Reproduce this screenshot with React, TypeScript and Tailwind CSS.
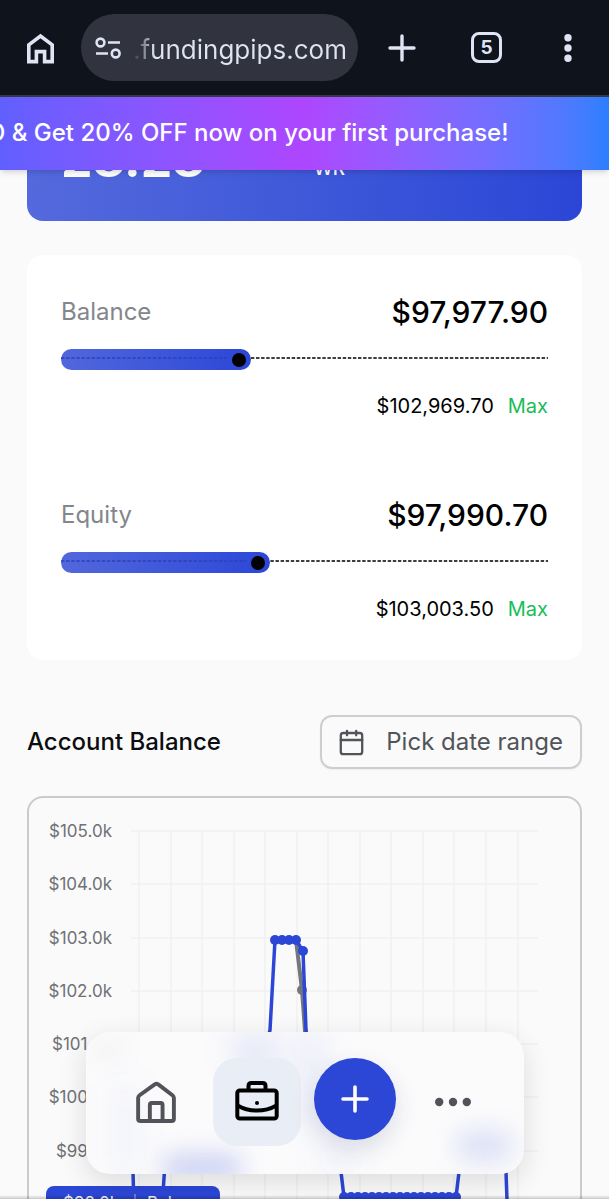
import { useState } from 'react'

const meters = [
  { label: 'Balance', value: '$97,977.90', max: '$102,969.70', fill: 39 },
  { label: 'Equity', value: '$97,990.70', max: '$103,003.50', fill: 43 },
]

const yTicks = [
  { label: '$105.0k', y: 33 },
  { label: '$104.0k', y: 86 },
  { label: '$103.0k', y: 140 },
  { label: '$102.0k', y: 193 },
  { label: '$101.0k', y: 246 },
  { label: '$100.0k', y: 299 },
  { label: '$99.0k', y: 353 },
]

const xLines = [110, 142, 173, 205, 236, 268, 299, 331, 362, 394, 425, 457, 489]

const balanceDots = [
  [246, 142],
  [253, 142],
  [260, 142],
  [267, 142],
  [274, 153],
]

const flatDots = Array.from({ length: 17 }, (_, i) => 315 + i * 7)

function BrowserBar() {
  return (
    <header className="flex h-[97px] shrink-0 items-center border-b-2 border-[#343848] bg-[#0f131c] pr-[36px] pl-[22px] text-[#dfe3f3]">
      <button type="button" aria-label="Home" className="p-1">
        <svg className="block h-[32px] w-[29px]" viewBox="0 0 29 32" fill="none" stroke="currentColor" strokeWidth="3.6">
          <path d="M2.8 29.6V12.8L14.5 4l11.7 8.8v16.8h-7.6V19.6h-8.2v10z" />
        </svg>
      </button>
      <div className="ml-[22px] flex h-[67px] min-w-0 flex-1 items-center rounded-full bg-[#31343e] pr-3 pl-[14px]">
        <button type="button" aria-label="Site settings" className="shrink-0">
          <svg className="block h-[24px] w-[26px]" viewBox="0 0 26 24" fill="none" stroke="currentColor" strokeWidth="2.6">
            <circle cx="5.5" cy="6.5" r="3.9" />
            <circle cx="20.7" cy="17.5" r="3.9" />
            <path d="M13 6.5h12M1 17.5h12" />
          </svg>
        </button>
        <p className="ml-[12px] bg-linear-to-r from-transparent to-[#dfe3f3] to-[22px] bg-clip-text pt-1 text-[26px] whitespace-nowrap text-transparent">
          .fundingpips.com
        </p>
      </div>
      <div className="ml-[30px] flex shrink-0 items-center">
        <button type="button" aria-label="New tab">
          <svg className="block size-[28px]" viewBox="0 0 28 28" stroke="currentColor" strokeWidth="3.4" strokeLinecap="round">
            <path d="M14 2v24M2 14h24" />
          </svg>
        </button>
        <button
          type="button"
          aria-label="Open tabs"
          className="ml-[55px] flex size-[31px] items-center justify-center rounded-lg border-3 border-current text-[19px] leading-none font-bold"
        >
          5
        </button>
        <button type="button" aria-label="Menu" className="ml-[61px]">
          <svg className="block h-[30px] w-[10px]" viewBox="0 0 10 30" fill="currentColor">
            <circle cx="5" cy="4.8" r="3.7" />
            <circle cx="5" cy="15" r="3.7" />
            <circle cx="5" cy="25.2" r="3.7" />
          </svg>
        </button>
      </div>
    </header>
  )
}

function Meter({ label, value, max, fill }: (typeof meters)[number]) {
  return (
    <div>
      <div className="flex items-center justify-between">
        <span className="text-[24px] text-[#83868b]">{label}</span>
        <span className="text-[30px] leading-[44px] font-medium text-black">{value}</span>
      </div>
      <div className="relative mt-[15px] h-[21px]">
        <div
          className="absolute inset-y-0 left-0 flex items-center justify-end rounded-full bg-linear-to-r from-[#5267dc] to-[#2c46d8] pr-[5px]"
          style={{ width: `${fill}%` }}
        >
          <span className="size-[14px] rounded-full bg-black" />
        </div>
        <svg className="absolute inset-x-0 top-2 h-[2px] w-full" aria-hidden="true">
          <line x1="0" x2={`${fill - 5}%`} y1="1" y2="1" stroke="#2c40b8" strokeWidth="1.5" strokeDasharray="3.4 1.7" />
          <line x1={`${fill}%`} x2="100%" y1="1" y2="1" stroke="#3a3d42" strokeWidth="2" strokeDasharray="3.4 1.7" />
        </svg>
      </div>
      <div className="mt-[20px] flex justify-end gap-[14px] text-[20px] leading-[32px]">
        <span className="text-black">{max}</span>
        <span className="text-[#18bd58]">Max</span>
      </div>
    </div>
  )
}

function BalanceChart() {
  return (
    <svg className="block w-full" viewBox="0 0 551 440" role="img" aria-label="Account balance over time">
      <g stroke="#f1f1f1" strokeWidth="1.5">
        {yTicks.map((t) => (
          <line key={t.label} x1="102" x2="509" y1={t.y} y2={t.y} />
        ))}
        {xLines.map((x) => (
          <line key={x} x1={x} x2={x} y1="33" y2="440" />
        ))}
      </g>
      <g fill="#6f7175" fontSize="17" textAnchor="end">
        {yTicks.map((t) => (
          <text key={t.label} x="83" y={t.y + 6}>
            {t.label}
          </text>
        ))}
      </g>
      <path d="M267 142L273 192L278 260" fill="none" stroke="#73777c" strokeWidth="4" />
      <circle cx="273" cy="192" r="5" fill="#73777c" />
      <path
        d="M102 300L105 410M133 410L136 365H202L209 252H236L241 232L246 142H267L274 153L277 232L288 320L312 374L315 399H427L430 374L437 346H475L477 374L479 430"
        fill="none"
        stroke="#2c46d6"
        strokeWidth="3.5"
        strokeLinejoin="round"
      />
      <g fill="#2c46d6">
        {balanceDots.map(([x, y]) => (
          <circle key={x} cx={x} cy={y} r="5" />
        ))}
        {flatDots.map((x) => (
          <circle key={x} cx={x} cy="399" r="5" />
        ))}
        <rect x="17" y="388" width="174" height="44" rx="8" />
      </g>
      <text x="34" y="411" fontSize="17" fill="#ffffff">
        $98.0k
      </text>
      <line x1="106" x2="106" y1="396" y2="418" stroke="#8090e8" strokeWidth="1.5" />
      <text x="118" y="411" fontSize="17" fill="#ffffff">
        Balance
      </text>
    </svg>
  )
}

function BottomNav() {
  const [active, setActive] = useState('accounts')
  const tab = 'flex size-[88px] items-center justify-center rounded-3xl'
  const tone = (name: string) => (active === name ? 'bg-[#e9edf5] text-black' : 'text-[#515359]')

  return (
    <nav className="absolute bottom-[25px] left-1/2 z-20 h-[142px] w-[438px] -translate-x-1/2 rounded-3xl bg-[#fbfbfc] shadow-[0_8px_28px_rgba(0,0,0,0.12)]">
      {/* soft glow of the chart line behind the glass */}
      <div className="absolute inset-0 overflow-hidden rounded-3xl" aria-hidden="true">
        <div className="absolute top-1 left-[146px] h-8 w-12 rounded-full bg-[#2c46d6]/14 blur-lg" />
        <div className="absolute top-0 left-[218px] h-24 w-4 rounded-full bg-[#2c46d6]/14 blur-lg" />
        <div className="absolute top-[50px] left-[30px] h-24 w-5 rounded-full bg-[#2c46d6]/6 blur-lg" />
        <div className="absolute top-[122px] left-[76px] h-7 w-20 rounded-xl bg-[#2c46d6]/22 blur-md" />
        <div className="absolute top-[98px] left-[370px] h-8 w-14 rounded-xl bg-[#2c46d6]/14 blur-md" />
        <div className="absolute top-[112px] left-[232px] h-8 w-9 rounded-full bg-[#2c46d6]/6 blur-lg" />
        <div className="absolute top-2 left-[2px] h-5 w-10 rounded-full bg-black/3 blur-md" />
      </div>
      <div className="relative flex items-start justify-center gap-[13px] pt-[26px]">
        <button type="button" aria-label="Home" onClick={() => setActive('home')} className={`${tab} ${tone('home')}`}>
          <svg className="size-[43px]" viewBox="0 0 44 44" fill="none" stroke="currentColor" strokeWidth="4" strokeLinejoin="round">
            <path d="M3.2 17.5c0-1.3.5-2.1 1.5-2.9L20.2 3.5c1.1-.9 2.5-.9 3.6 0l14.5 11.1c1 .8 1.5 1.6 1.5 2.9v21c0 1.5-1 2.5-2.5 2.5H5.7c-1.5 0-2.5-1-2.5-2.5z" />
            <path d="M15.2 40V24.5c0-1.2.8-2 2-2h9c1.2 0 2 .8 2 2V40" />
          </svg>
        </button>
        <button type="button" aria-label="Accounts" onClick={() => setActive('accounts')} className={`${tab} ${tone('accounts')}`}>
          <svg className="size-[46px]" viewBox="0 0 46 46" fill="none" stroke="currentColor" strokeWidth="4" strokeLinejoin="round">
            <rect x="3.3" y="11.5" width="39.4" height="28" rx="2.5" />
            <path d="M14.5 11V7c0-1.8 1.2-3 3-3h11c1.8 0 3 1.2 3 3v4" />
            <path d="M3.5 26.5c12 6.8 27 6.8 39 0" />
            <circle cx="23" cy="24" r="2" fill="currentColor" stroke="none" />
          </svg>
        </button>
        <button
          type="button"
          aria-label="New challenge"
          className="flex size-[82px] items-center justify-center rounded-full bg-[#2c47d6] text-white shadow-[0_10px_24px_rgba(30,40,90,0.14)]"
        >
          <svg className="size-[28px]" viewBox="0 0 28 28" stroke="currentColor" strokeWidth="3.6" strokeLinecap="round">
            <path d="M14 2v24M2 14h24" />
          </svg>
        </button>
        <button type="button" aria-label="More" onClick={() => setActive('more')} className={`${tab} ${tone('more')}`}>
          <svg className="size-[40px]" viewBox="0 0 40 40" fill="currentColor">
            <circle cx="6.2" cy="20" r="4.2" />
            <circle cx="20" cy="20" r="4.2" />
            <circle cx="33.8" cy="20" r="4.2" />
          </svg>
        </button>
      </div>
    </nav>
  )
}

export default function App() {
  return (
    <div className="relative flex h-screen flex-col overflow-hidden bg-[#fafafa] font-['Inter','Liberation_Sans',sans-serif] text-[#0c0d10]">
      <BrowserBar />
      <div className="z-10 flex h-[73px] shrink-0 items-center overflow-hidden bg-linear-to-r from-[#615fff] via-[#ad46ff] to-[#2b7fff] pb-0.5 shadow-md">
        <p className="-ml-3 text-[24px] font-medium whitespace-nowrap text-white">
          D &amp; Get 20% OFF now on your first purchase!
        </p>
      </div>

      <main className="min-h-0 flex-1 px-[27px]">
        <section className="-mt-6 flex h-[75px] items-start rounded-b-2xl bg-linear-to-r from-[#5469dc] to-[#2b46d6] pl-[34px] text-white">
          <span className="-mt-3 text-[50px] leading-[50px] font-bold">28.28</span>
          <span className="ml-[109px] text-[19px] leading-[46px] font-medium">WR</span>
        </section>

        <section className="mt-[34px] flex flex-col gap-[71px] rounded-2xl bg-white px-[34px] pt-[35px] pb-[35px]">
          {meters.map((m) => (
            <Meter key={m.label} {...m} />
          ))}
        </section>

        <div className="mt-[55px] flex items-center justify-between">
          <h2 className="text-[24px] font-medium">Account Balance</h2>
          <button
            type="button"
            className="flex h-[54px] items-center rounded-xl border-2 border-[#cdced0] px-[17px] text-[24px] text-[#515459] shadow-xs"
          >
            <svg className="mr-[22px] h-[27px] w-[25px]" viewBox="0 0 25 27" fill="none" stroke="currentColor" strokeWidth="2.3" strokeLinecap="round">
              <rect x="1.8" y="4" width="21.4" height="21.2" rx="2.5" />
              <path d="M1.8 11h21.4M8 1.8v4.5M17.2 1.8v4.5" />
            </svg>
            Pick date range
          </button>
        </div>

        <section className="mt-[27px] overflow-hidden rounded-2xl border-2 border-[#c9cacb]">
          <BalanceChart />
        </section>
      </main>

      <BottomNav />
      <div className="absolute inset-x-0 bottom-0 z-30 h-1 bg-linear-to-b from-transparent to-black/20" />
    </div>
  )
}
